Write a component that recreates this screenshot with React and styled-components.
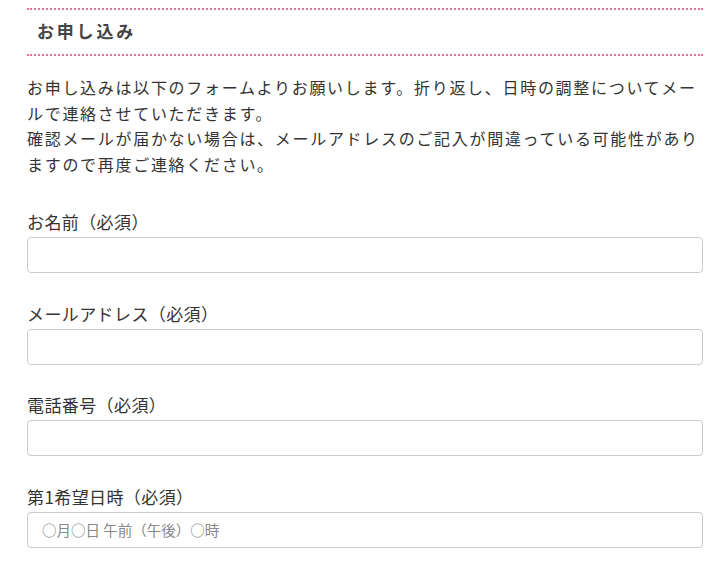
import React from "react";
import styled, { createGlobalStyle } from "styled-components";

const GlobalStyle = createGlobalStyle`
  body {
    margin: 0;
    background: #fff;
    font-family: "Noto Sans CJK JP", sans-serif;
    color: #333;
  }
`;

const Page = styled.div`
  padding: 8px 23px 0 27px;
`;

const Heading = styled.h2`
  margin: 0;
  border-top: 2px dotted #e8719c;
  border-bottom: 2px dotted #e8719c;
  padding: 9px 10px 12px;
  font-size: 17px;
  line-height: 23px;
  font-weight: bold;
  letter-spacing: 2.8px;
  color: #444;
`;

const Lead = styled.p`
  margin: 19px 0 0;
  font-size: 16px;
  line-height: 25.6px;
  letter-spacing: 1.7px;
  color: #333;
`;

const Form = styled.form`
  display: flex;
  flex-direction: column;
  margin-top: 33px;
`;

const Field = styled.div`
  display: flex;
  flex-direction: column;
  margin-bottom: 28.5px;
`;

const Label = styled.label`
  font-size: 17px;
  line-height: 24px;
  letter-spacing: 0.4px;
  margin-bottom: 3px;
  color: #333;
`;

const Input = styled.input`
  box-sizing: border-box;
  width: 100%;
  height: 36px;
  border: 1px solid #ccc;
  border-radius: 4px;
  padding: 0 14px;
  font-family: inherit;
  font-size: 14.5px;
  color: #333;
  outline: none;

  &::placeholder {
    color: #888;
  }
`;

const fields = [
  { label: "お名前（必須）", type: "text" },
  { label: "メールアドレス（必須）", type: "email" },
  { label: "電話番号（必須）", type: "tel" },
  { label: "第1希望日時（必須）", type: "text", placeholder: "○月○日 午前（午後）○時" },
];

export default function App() {
  return (
    <>
      <GlobalStyle />
      <Page>
        <Heading>お申し込み</Heading>
        <Lead>
          お申し込みは以下のフォームよりお願いします。折り返し、日時の調整についてメールで連絡させていただきます。
          <br />
          確認メールが届かない場合は、メールアドレスのご記入が間違っている可能性がありますので再度ご連絡ください。
        </Lead>
        <Form>
          {fields.map((f) => (
            <Field key={f.label}>
              <Label>{f.label}</Label>
              <Input type={f.type} placeholder={f.placeholder} />
            </Field>
          ))}
        </Form>
      </Page>
    </>
  );
}
